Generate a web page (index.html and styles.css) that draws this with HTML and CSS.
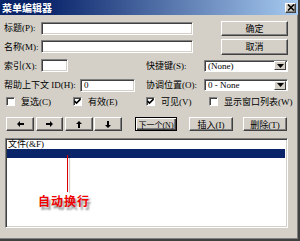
FILE: index.html
```html
<!DOCTYPE html>
<html lang="zh">
<head>
  <meta charset="UTF-8" />
  <title>菜单编辑器</title>
  <link rel="stylesheet" href="styles.css">
</head>
<body>
  <div class="window">
    <div class="titlebar">
      <span class="title">菜单编辑器</span>
      <span class="close">
        <svg width="8" height="7" viewBox="0 0 8 7"><path d="M1 0.5 L7 6.5 M7 0.5 L1 6.5" stroke="#000" stroke-width="1.6"/></svg>
      </span>
    </div>

    <div class="body">
      <div class="row r1">
        <span class="lbl w37">标题(P):</span>
        <div class="field caption"></div>
        <button class="btn side">确定</button>
      </div>
      <div class="row r2">
        <span class="lbl w37">名称(M):</span>
        <div class="field caption"></div>
        <button class="btn side">取消</button>
      </div>
      <div class="row r3">
        <span class="lbl w37">索引(X):</span>
        <div class="field index"></div>
        <span class="lbl right-lbl">快捷键(S):</span>
        <div class="combo">
          <span class="combo-text">(None)</span>
          <span class="drop"><svg width="7" height="4" viewBox="0 0 7 4"><path d="M0 0 H7 L3.5 4 Z" fill="#000"/></svg></span>
        </div>
      </div>
      <div class="row r4">
        <span class="lbl w76">帮助上下文 ID(H):</span>
        <div class="field help">0</div>
        <span class="lbl right-lbl r4-lbl">协调位置(O):</span>
        <div class="combo">
          <span class="combo-text">0 - None</span>
          <span class="drop"><svg width="7" height="4" viewBox="0 0 7 4"><path d="M0 0 H7 L3.5 4 Z" fill="#000"/></svg></span>
        </div>
      </div>
      <div class="row r5">
        <label class="check c1"><span class="box"></span>复选(C)</label>
        <label class="check c2"><span class="box"><svg width="7" height="7" viewBox="0 0 7 7"><path d="M0.5 3 L2.5 5 L6.5 1" stroke="#000" stroke-width="1.6" fill="none"/></svg></span>有效(E)</label>
        <label class="check c3"><span class="box"><svg width="7" height="7" viewBox="0 0 7 7"><path d="M0.5 3 L2.5 5 L6.5 1" stroke="#000" stroke-width="1.6" fill="none"/></svg></span>可见(V)</label>
        <label class="check"><span class="box"></span>显示窗口列表(W)</label>
      </div>
      <div class="row r6">
        <button class="btn arrow a1"><svg width="7" height="6" viewBox="0 0 7 6"><path d="M0 3 L3 0 V2 H7 V4 H3 V6 Z" fill="#000"/></svg></button>
        <button class="btn arrow a2"><svg width="7" height="6" viewBox="0 0 7 6"><path d="M7 3 L4 0 V2 H0 V4 H4 V6 Z" fill="#000"/></svg></button>
        <button class="btn arrow a3"><svg width="6" height="7" viewBox="0 0 6 7"><path d="M3 0 L0 3 H2 V7 H4 V3 H6 Z" fill="#000"/></svg></button>
        <button class="btn arrow a4"><svg width="6" height="7" viewBox="0 0 6 7"><path d="M3 7 L0 4 H2 V0 H4 V4 H6 Z" fill="#000"/></svg></button>
        <button class="btn default next">下一个(N)</button>
        <button class="btn insert">插入(I)</button>
        <button class="btn delete">删除(T)</button>
      </div>
      <div class="list">
        <div class="item">文件(&amp;F)</div>
        <div class="item sel"></div>
      </div>
    </div>

    <div class="pointer"></div>
    <div class="note">自动换行</div>
  </div>
</body>
</html>
```

FILE: styles.css
```css
* { box-sizing: border-box; }
body {
  margin: 0;
  background: #d4d0c8;
  font-family: "Liberation Serif", "Noto Sans CJK SC", serif;
  font-size: 9px;
  color: #000;
}
.window {
  position: relative;
  width: 300px; height: 241px;
  background: #d4d0c8;
  border-right: 2px solid #404040;
  border-bottom: 2px solid #404040;
  box-shadow: inset -1px -1px 0 #808080;
  overflow: hidden;
}
.titlebar {
  display: flex; align-items: center;
  height: 15px; padding: 0 2px 0 2px;
  background: linear-gradient(90deg, #0a246a 0%, #0a246a 15%, #a6caf0 100%);
}
.title {
  color: #fff; font-weight: bold; font-size: 10px;
  font-family: "Noto Sans CJK SC", sans-serif;
  line-height: 15px;
}
.close {
  margin-left: auto;
  width: 11px; height: 10px;
  display: flex; align-items: center; justify-content: center;
  background: #d4d0c8;
  border: 1px solid; border-color: #fff #404040 #404040 #fff;
  box-shadow: inset -1px -1px #808080;
}

.body { padding: 0 10px 0 4px; }
.row { display: flex; align-items: center; white-space: nowrap; }
.row > * { flex-shrink: 0; }
.r1 { margin-top: 5px; height: 16px; }
.r2 { margin-top: 2px; height: 17px; }
.r3 { margin-top: 3px; height: 15px; }
.r4 { margin-top: 4px; height: 16px; }
.r5 { margin-top: 2px; height: 13px; padding-left: 2px; }
.r6 { margin-top: 9px; height: 14px; padding-left: 2px; }

.lbl { line-height: 12px; }
.w37 { width: 37px; }
.w76 { width: 76px; }
.right-lbl { width: 58px; margin-left: 78px; }
.r4-lbl { margin-left: 11px; }

.field {
  height: 13px; background: #fff;
  border: 1px solid; border-color: #808080 #fff #fff #808080;
  box-shadow: inset 1px 1px #404040, inset -1px -1px #d4d0c8;
  padding: 0 3px; line-height: 11px;
}
.caption { width: 152px; }
.index { width: 27px; }
.help { width: 55px; }

.combo {
  display: flex; align-items: center;
  width: 84px; height: 12px; margin-left: auto;
  background: #fff;
  border: 1px solid; border-color: #808080 #fff #fff #808080;
  box-shadow: inset 1px 1px #404040;
  padding: 1px 1px 1px 3px;
  font-size: 9px;
}
.combo-text { flex: 1; line-height: 10px; }
.drop {
  width: 12px; height: 9px;
  display: flex; align-items: center; justify-content: center;
  background: #d4d0c8;
  border: 1px solid; border-color: #fff #404040 #404040 #fff;
}

.btn {
  height: 15px; padding: 0;
  background: #d4d0c8;
  border: 1px solid; border-color: #fff #404040 #404040 #fff;
  box-shadow: inset -1px -1px #808080;
  font: inherit; color: #000; white-space: nowrap;
  display: flex; align-items: center; justify-content: center;
}
.side { width: 67px; margin-left: auto; }
.r2 .side { height: 16px; }

.check { display: flex; align-items: center; }
.c1 { width: 67px; }
.c2 { width: 73px; }
.c3 { width: 63px; }
.box {
  width: 9px; height: 9px; margin-right: 6px;
  background: #fff;
  border: 1px solid; border-color: #808080 #fff #fff #808080;
  box-shadow: inset 1px 1px #404040;
  display: flex; align-items: center; justify-content: center;
}

.r6 .btn { height: 14px; }
.arrow { width: 28px; }
.a1 { margin-right: 2px; }
.a2 { width: 27px; margin-right: 2px; }
.a3 { margin-right: 1px; }
.next {
  width: 42px; margin-left: 13px;
  font-size: 8px;
  border: 1px solid #000;
  box-shadow: inset 1px 1px #fff, inset -1px -1px #404040, inset -2px -2px #808080;
}
.insert { width: 44px; margin-left: 12px; }
.delete { width: 44px; margin-left: 10px; }

.list {
  margin: 7px 0 0 1px;
  height: 90px;
  background: #fff;
  border: 1px solid; border-color: #808080 #fff #fff #808080;
  box-shadow: inset 1px 1px #404040, inset -1px -1px #d4d0c8;
  padding: 1px 2px 0 1px;
}
.item { height: 9px; line-height: 9px; padding-left: 1px; }
.sel { background: #0a246a; }

.pointer {
  position: absolute; left: 67px; top: 155px;
  width: 1px; height: 37px;
  background: #e00000;
  box-shadow: 2px 1px 1px rgba(0, 0, 0, 0.25);
}
.note {
  position: absolute; left: 38px; top: 194px;
  color: #f00000; font-weight: bold; font-size: 12px;
  font-family: "Noto Sans CJK SC", sans-serif;
  letter-spacing: 1px; line-height: 14px;
  text-shadow: 2px 3px 2px rgba(0, 0, 0, 0.45);
}
```
